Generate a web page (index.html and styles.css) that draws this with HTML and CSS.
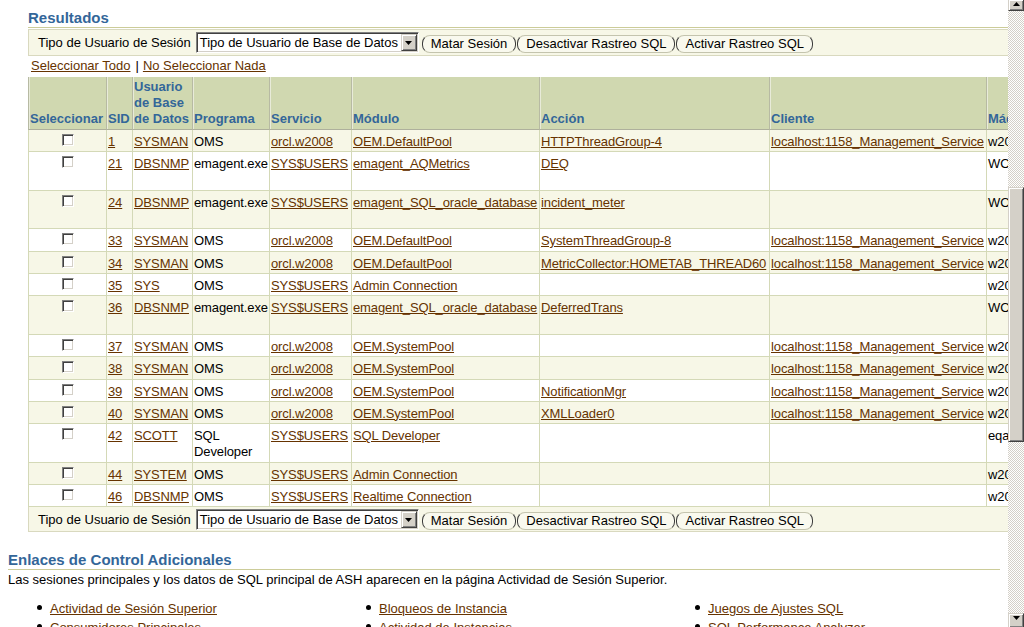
FILE: index.html
```html
<!DOCTYPE html>
<html lang="es">
<head>
<meta charset="utf-8">
<title>Resultados</title>
<link rel="stylesheet" href="styles.css">
</head>
<body>
<div class="window">
  <main class="page">
    <section class="results">
      <h2 class="hdr hdr-first">Resultados</h2>
      <div class="toolbar toolbar-top">
        <span class="tb-label">Tipo de Usuario de Sesión</span>
        <div class="select"><span class="select-text">Tipo de Usuario de Base de Datos</span><span class="select-btn"><svg width="7" height="4" viewBox="0 0 7 4"><polygon points="0,0 7,0 3.5,4" fill="#000"/></svg></span></div>
        <button type="button" class="btn btn-first">Matar Sesión</button>
        <button type="button" class="btn">Desactivar Rastreo SQL</button>
        <button type="button" class="btn">Activar Rastreo SQL</button>
      </div>
      <div class="selectall"><a href="#">Seleccionar Todo</a><span class="sep">|</span><a href="#">No Seleccionar Nada</a></div>
      <table class="grid">
        <thead>
          <tr>
            <th class="c-sel">Seleccionar</th>
            <th class="c-sid">SID</th>
            <th class="c-usr">Usuario de Base de Datos</th>
            <th class="c-prg">Programa</th>
            <th class="c-srv">Servicio</th>
            <th class="c-mod">Módulo</th>
            <th class="c-acc">Acción</th>
            <th class="c-cli">Cliente</th>
            <th class="c-maq">Máquina</th>
            <th class="c-ter">Terminal</th>
          </tr>
        </thead>
        <tbody>
          <tr class="alt">
            <td class="chk"><span class="cb"></span></td><td><a href="#">1</a></td><td><a href="#">SYSMAN</a></td><td>OMS</td><td><a href="#">orcl.w2008</a></td><td><a href="#">OEM.DefaultPool</a></td><td><a href="#">HTTPThreadGroup-4</a></td><td><a href="#">localhost:1158_Management_Service</a></td><td>w2008</td><td>unknown</td>
          </tr>
          <tr>
            <td class="chk"><span class="cb"></span></td><td><a href="#">21</a></td><td><a href="#">DBSNMP</a></td><td>emagent.exe</td><td><a href="#">SYS$USERS</a></td><td><a href="#">emagent_AQMetrics</a></td><td><a href="#">DEQ</a></td><td></td><td>WORKGROUP\W2008</td><td>W2008<br>agente</td>
          </tr>
          <tr class="alt">
            <td class="chk"><span class="cb"></span></td><td><a href="#">24</a></td><td><a href="#">DBSNMP</a></td><td>emagent.exe</td><td><a href="#">SYS$USERS</a></td><td><a href="#">emagent_SQL_oracle_database</a></td><td><a href="#">incident_meter</a></td><td></td><td>WORKGROUP\W2008</td><td>W2008<br>agente</td>
          </tr>
          <tr>
            <td class="chk"><span class="cb"></span></td><td><a href="#">33</a></td><td><a href="#">SYSMAN</a></td><td>OMS</td><td><a href="#">orcl.w2008</a></td><td><a href="#">OEM.DefaultPool</a></td><td><a href="#">SystemThreadGroup-8</a></td><td><a href="#">localhost:1158_Management_Service</a></td><td>w2008</td><td>unknown</td>
          </tr>
          <tr class="alt">
            <td class="chk"><span class="cb"></span></td><td><a href="#">34</a></td><td><a href="#">SYSMAN</a></td><td>OMS</td><td><a href="#">orcl.w2008</a></td><td><a href="#">OEM.DefaultPool</a></td><td><a href="#">MetricCollector:HOMETAB_THREAD60</a></td><td><a href="#">localhost:1158_Management_Service</a></td><td>w2008</td><td>unknown</td>
          </tr>
          <tr>
            <td class="chk"><span class="cb"></span></td><td><a href="#">35</a></td><td><a href="#">SYS</a></td><td>OMS</td><td><a href="#">SYS$USERS</a></td><td><a href="#">Admin Connection</a></td><td></td><td></td><td>w2008</td><td>unknown</td>
          </tr>
          <tr class="alt">
            <td class="chk"><span class="cb"></span></td><td><a href="#">36</a></td><td><a href="#">DBSNMP</a></td><td>emagent.exe</td><td><a href="#">SYS$USERS</a></td><td><a href="#">emagent_SQL_oracle_database</a></td><td><a href="#">DeferredTrans</a></td><td></td><td>WORKGROUP\W2008</td><td>W2008<br>agente</td>
          </tr>
          <tr>
            <td class="chk"><span class="cb"></span></td><td><a href="#">37</a></td><td><a href="#">SYSMAN</a></td><td>OMS</td><td><a href="#">orcl.w2008</a></td><td><a href="#">OEM.SystemPool</a></td><td></td><td><a href="#">localhost:1158_Management_Service</a></td><td>w2008</td><td>unknown</td>
          </tr>
          <tr class="alt">
            <td class="chk"><span class="cb"></span></td><td><a href="#">38</a></td><td><a href="#">SYSMAN</a></td><td>OMS</td><td><a href="#">orcl.w2008</a></td><td><a href="#">OEM.SystemPool</a></td><td></td><td><a href="#">localhost:1158_Management_Service</a></td><td>w2008</td><td>unknown</td>
          </tr>
          <tr>
            <td class="chk"><span class="cb"></span></td><td><a href="#">39</a></td><td><a href="#">SYSMAN</a></td><td>OMS</td><td><a href="#">orcl.w2008</a></td><td><a href="#">OEM.SystemPool</a></td><td><a href="#">NotificationMgr</a></td><td><a href="#">localhost:1158_Management_Service</a></td><td>w2008</td><td>unknown</td>
          </tr>
          <tr class="alt">
            <td class="chk"><span class="cb"></span></td><td><a href="#">40</a></td><td><a href="#">SYSMAN</a></td><td>OMS</td><td><a href="#">orcl.w2008</a></td><td><a href="#">OEM.SystemPool</a></td><td><a href="#">XMLLoader0</a></td><td><a href="#">localhost:1158_Management_Service</a></td><td>w2008</td><td>unknown</td>
          </tr>
          <tr>
            <td class="chk"><span class="cb"></span></td><td><a href="#">42</a></td><td><a href="#">SCOTT</a></td><td>SQL Developer</td><td><a href="#">SYS$USERS</a></td><td><a href="#">SQL Developer</a></td><td></td><td></td><td>eqa-pc</td><td>unknown</td>
          </tr>
          <tr class="alt">
            <td class="chk"><span class="cb"></span></td><td><a href="#">44</a></td><td><a href="#">SYSTEM</a></td><td>OMS</td><td><a href="#">SYS$USERS</a></td><td><a href="#">Admin Connection</a></td><td></td><td></td><td>w2008</td><td>unknown</td>
          </tr>
          <tr>
            <td class="chk"><span class="cb"></span></td><td><a href="#">46</a></td><td><a href="#">DBSNMP</a></td><td>OMS</td><td><a href="#">SYS$USERS</a></td><td><a href="#">Realtime Connection</a></td><td></td><td></td><td>w2008</td><td>unknown</td>
          </tr>
        </tbody>
      </table>
      <div class="toolbar toolbar-bottom">
        <span class="tb-label">Tipo de Usuario de Sesión</span>
        <div class="select"><span class="select-text">Tipo de Usuario de Base de Datos</span><span class="select-btn"><svg width="7" height="4" viewBox="0 0 7 4"><polygon points="0,0 7,0 3.5,4" fill="#000"/></svg></span></div>
        <button type="button" class="btn btn-first">Matar Sesión</button>
        <button type="button" class="btn">Desactivar Rastreo SQL</button>
        <button type="button" class="btn">Activar Rastreo SQL</button>
      </div>
    </section>

    <section class="more">
      <h2 class="hdr">Enlaces de Control Adicionales</h2>
      <p class="note">Las sesiones principales y los datos de SQL principal de ASH aparecen en la página Actividad de Sesión Superior.</p>
      <div class="linkcols">
        <ul>
          <li><a href="#">Actividad de Sesión Superior</a></li>
          <li><a href="#">Consumidores Principales</a></li>
        </ul>
        <ul>
          <li><a href="#">Bloqueos de Instancia</a></li>
          <li><a href="#">Actividad de Instancias</a></li>
        </ul>
        <ul>
          <li><a href="#">Juegos de Ajustes SQL</a></li>
          <li><a href="#">SQL Performance Analyzer</a></li>
        </ul>
      </div>
    </section>
  </main>

  <div class="vscroll" aria-hidden="true">
    <div class="sb-btn sb-up"><svg width="7" height="4" viewBox="0 0 7 4"><polygon points="3.5,0 7,4 0,4" fill="#000"/></svg></div>
    <div class="sb-track"><div class="sb-thumb"></div></div>
    <div class="sb-btn sb-down"><svg width="7" height="4" viewBox="0 0 7 4"><polygon points="0,0 7,0 3.5,4" fill="#000"/></svg></div>
  </div>
</div>
</body>
</html>
```

FILE: styles.css
```css
* { box-sizing: border-box; }

html, body {
  margin: 0;
  padding: 0;
}

body {
  font-family: "Liberation Sans", Arial, sans-serif;
  font-size: 13px;
  color: #000;
  background: #fff;
}

a {
  color: #663300;
  text-decoration: underline;
}

.window {
  display: flex;
  width: 1024px;
  height: 627px;
  overflow: hidden;
}

.page {
  flex: 0 0 1008px;
  width: 1008px;
  height: 627px;
  overflow: hidden;
  padding: 0 8px;
}

/* ---------- headings ---------- */
.hdr {
  margin: 0;
  font-size: 15px;
  line-height: 17px;
  font-weight: bold;
  color: #336699;
  border-bottom: 1px solid #cccc99;
  padding-bottom: 1px;
}

.hdr-first {
  margin-top: 9px;
}

/* ---------- results ---------- */
.results {
  margin-left: 20px;
  width: max-content;
}

.toolbar {
  display: flex;
  align-items: center;
  background: #f7f7e7;
  border: 1px solid #d9d9bf;
  white-space: nowrap;
}

.toolbar-top {
  margin-top: 1px;
  padding: 2px 0;
}

.toolbar-bottom {
  border-top: 0;
  padding: 2px 0 1px;
}

.tb-label {
  padding-left: 9px;
  margin-right: 5px;
  line-height: 16px;
}

.select {
  display: flex;
  align-items: center;
  width: 223px;
  height: 21px;
  background: #fff;
  border: 1px solid;
  border-color: #808080 #ffffff #ffffff #808080;
  box-shadow: inset 1px 1px 0 #404040, inset -1px -1px 0 #d4d0c8;
  padding: 0 1px 0 3px;
}

.select-text {
  flex: 1;
  line-height: 16px;
}

.select-btn {
  display: flex;
  align-items: center;
  justify-content: center;
  width: 16px;
  height: 17px;
  background: #d4d0c8;
  border: 1px solid;
  border-color: #d4d0c8 #404040 #404040 #d4d0c8;
  box-shadow: inset 1px 1px 0 #ffffff, inset -1px -1px 0 #808080;
}

.btn {
  align-self: flex-end;
  font: inherit;
  color: #000;
  height: 18px;
  line-height: 14px;
  padding: 0 8px 1px;
  margin: 0 0 0 1px;
  background: #f9f9ee;
  border: 1px solid;
  border-color: #c4c4ae #3a3a3a #c4c4ae #3a3a3a;
  border-radius: 8px;
  white-space: nowrap;
}

.btn-first {
  margin-left: 3px;
}

.selectall {
  padding: 2px 3px 3px;
  line-height: 16px;
  white-space: nowrap;
}

.sep {
  margin: 0 4px 0 5px;
}

/* ---------- grid ---------- */
.grid {
  table-layout: fixed;
  width: 1188px;
  border-collapse: separate;
  border-spacing: 0;
}

.grid th,
.grid td {
  text-align: left;
}

.grid th {
  background: #d0d8b0;
  color: #336699;
  font-weight: bold;
  line-height: 16px;
  vertical-align: bottom;
  padding: 2px 1px;
  border-left: 1px solid #b7baa3;
  border-bottom: 1px solid #aeb09c;
  box-shadow: inset 1px 0 0 #e8ebd9;
}

.grid td {
  vertical-align: top;
  line-height: 16.3px;
  padding: 4px 1px 1px;
  letter-spacing: -0.11px;
  border-left: 1px solid #d4d9b7;
  border-bottom: 1px solid #d4d9b7;
  background: #fff;
}

.grid tr.alt td {
  background: #f7f7e7;
}

.c-sel { width: 78px; }
.c-sid { width: 26px; }
.c-usr { width: 60px; }
.c-prg { width: 77px; }
.c-srv { width: 82px; }
.c-mod { width: 188px; }
.c-acc { width: 230px; }
.c-cli { width: 217px; }
.c-maq { width: 140px; }
.c-ter { width: 90px; }

.grid td.chk {
  text-align: center;
}

.cb {
  display: block;
  width: 12px;
  height: 12px;
  margin: 0 auto;
  background: #fff;
  border: 1px solid;
  border-color: #808080 #ffffff #ffffff #808080;
  box-shadow: inset 1px 1px 0 #404040, inset -1px -1px 0 #d4d0c8;
}

/* ---------- additional links ---------- */
.more {
  margin-top: 19px;
}

.note {
  margin: 2px 0 0;
  line-height: 16px;
}

.linkcols {
  display: grid;
  grid-template-columns: repeat(3, 329px);
  margin-top: 13px;
}

.linkcols ul {
  margin: 0;
  padding: 0 0 0 29px;
  list-style: none;
}

.linkcols li {
  display: flex;
  align-items: center;
  gap: 8px;
  line-height: 16px;
  margin-bottom: 3px;
}

.linkcols li::before {
  content: "";
  flex: none;
  width: 5px;
  height: 5px;
  border-radius: 50%;
  background: #000;
  margin-bottom: 4px;
}

/* ---------- scrollbar ---------- */
.vscroll {
  flex: 0 0 16px;
  display: flex;
  flex-direction: column;
  height: 627px;
}

.sb-btn {
  display: flex;
  justify-content: center;
  align-items: flex-start;
  background: #d4d0c8;
  border: 1px solid;
  border-color: #d4d0c8 #404040 #404040 #d4d0c8;
  box-shadow: inset 1px 1px 0 #ffffff, inset -1px -1px 0 #808080;
}

.sb-up {
  height: 11px;
  border-top: 0;
  padding-top: 2px;
}

.sb-down {
  height: 14px;
  border-bottom: 0;
  padding-top: 2px;
}

.sb-track {
  flex: 1;
  padding-top: 176px;
  background-color: #ffffff;
  background-image: conic-gradient(#d4d0c8 25%, #ffffff 0 50%, #d4d0c8 0 75%, #ffffff 0);
  background-size: 2px 2px;
}

.sb-thumb {
  height: 255px;
  background: #d4d0c8;
  border: 1px solid;
  border-color: #d4d0c8 #404040 #404040 #d4d0c8;
  box-shadow: inset 1px 1px 0 #ffffff, inset -1px -1px 0 #808080;
}
```
